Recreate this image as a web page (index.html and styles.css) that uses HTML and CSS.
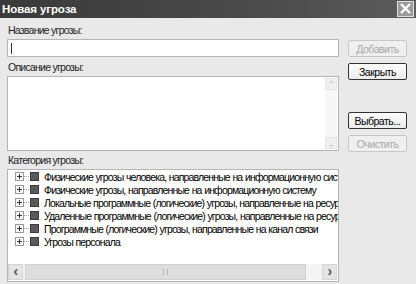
FILE: index.html
```html
<!DOCTYPE html>
<html>
<head>
    <title>Новая угроза</title>
    <link rel="stylesheet" href="styles.css">
</head>
<body>
    <div class="window">
        <div class="title-bar">
            <span class="title">Новая угроза</span>
            <div class="close-btn">
                <svg width="13" height="11" viewBox="0 0 13 11">
                    <path d="M2 1 L11 10 M11 1 L2 10" stroke="#fff" stroke-width="2.4" fill="none"/>
                </svg>
            </div>
        </div>
        <div class="content">
            <div class="left-col">
                <div class="label first">Название угрозы:</div>
                <div class="input"><span class="caret"></span></div>
                <div class="label second">Описание угрозы:</div>
                <div class="textarea">
                    <div class="vscroll">
                        <div class="arrow">&#8963;</div>
                        <div class="arrow">&#8964;</div>
                    </div>
                </div>
                <div class="label third">Категория угрозы:</div>
                <div class="tree">
                    <div class="tree-list">
                        <div class="tree-item"><span class="plus"></span><span class="dots"></span><span class="icon"></span><span class="text">Физические угрозы человека, направленные на информационную систему</span></div>
                        <div class="tree-item"><span class="plus"></span><span class="dots"></span><span class="icon"></span><span class="text">Физические угрозы, направленные на информационную систему</span></div>
                        <div class="tree-item"><span class="plus"></span><span class="dots"></span><span class="icon"></span><span class="text">Локальные программные (логические) угрозы, направленные на ресурсы</span></div>
                        <div class="tree-item"><span class="plus"></span><span class="dots"></span><span class="icon"></span><span class="text">Удаленные программные (логические) угрозы, направленные на ресурсы</span></div>
                        <div class="tree-item"><span class="plus"></span><span class="dots"></span><span class="icon"></span><span class="text">Программные (логические) угрозы, направленные на канал связи</span></div>
                        <div class="tree-item"><span class="plus"></span><span class="dots"></span><span class="icon"></span><span class="text">Угрозы персонала</span></div>
                    </div>
                    <div class="hscroll">
                        <div class="sb-btn">&lsaquo;</div>
                        <div class="thumb"><span class="grip"></span></div>
                        <div class="track"></div>
                        <div class="sb-btn">&rsaquo;</div>
                    </div>
                </div>
            </div>
            <div class="right-col">
                <div class="btn disabled add">Добавить</div>
                <div class="btn close">Закрыть</div>
                <div class="btn choose">Выбрать...</div>
                <div class="btn disabled clear">Очистить</div>
            </div>
        </div>
    </div>
</body>
</html>
```

FILE: styles.css
```css
html, body {
    margin: 0;
    padding: 0;
    background: #e9e9e9;
    font-family: 'Liberation Sans', Arial, sans-serif;
    font-size: 10.5px;
    letter-spacing: -0.75px;
    color: #000;
}
.window {
    width: 416px;
    height: 284px;
    background: #e9e9e9;
    overflow: hidden;
}
.title-bar {
    height: 18px;
    background: linear-gradient(to right, #3a3a3a, #4a4a4a 60%, #5c5c5c);
    display: flex;
    align-items: center;
    justify-content: space-between;
    padding: 0 2px 0 2px;
}
.title {
    color: #fff;
    font-weight: bold;
    font-size: 11.5px;
    letter-spacing: -0.1px;
}
.close-btn {
    width: 15px;
    height: 14px;
    border: 1px solid #e0e0e0;
    background: #9a9a9a;
    display: flex;
    align-items: center;
    justify-content: center;
    margin-top: -1px;
}
.content {
    display: flex;
    padding-left: 7px;
    gap: 9px;
}
.left-col {
    width: 332px;
    display: flex;
    flex-direction: column;
}
.label {
    height: 13px;
    line-height: 13px;
    white-space: nowrap;
    padding-left: 1px;
    color: #222;
}
.label.first { margin-top: 6px; margin-bottom: 2px; }
.label.second { margin-top: 4px; margin-bottom: 2px; }
.label.third { margin-top: 3px; margin-bottom: 2px; }
.input {
    height: 16px;
    background: #fff;
    border: 1px solid #b5b5b5;
    display: flex;
    align-items: center;
    padding-left: 3px;
}
.caret {
    width: 1px;
    height: 11px;
    background: #333;
}
.textarea {
    height: 73px;
    background: #fff;
    border: 1px solid #b5b5b5;
    display: flex;
    justify-content: flex-end;
}
.vscroll {
    width: 12px;
    margin: 1px 1px 1px 0;
    background: #f7f7f7;
    display: flex;
    flex-direction: column;
    justify-content: space-between;
}
.arrow {
    height: 12px;
    background: #f0f0f0;
    border: 1px solid #e4e4e4;
    box-sizing: border-box;
    color: #c8c8c8;
    font-size: 10px;
    line-height: 12px;
    text-align: center;
}
.tree {
    height: 111px;
    background: #fff;
    border: 1px solid #b5b5b5;
    display: flex;
    flex-direction: column;
    overflow: hidden;
}
.tree-list {
    flex: 1;
    overflow: hidden;
}
.tree-item {
    height: 13px;
    display: flex;
    align-items: center;
    white-space: nowrap;
    padding-left: 7px;
    font-size: 10.5px;
    letter-spacing: -0.85px;
    word-spacing: 0.5px;
}
.plus {
    width: 7px;
    height: 7px;
    border: 1px solid #9a9a9a;
    position: relative;
    flex: none;
    background: #fafafa;
}
.plus::before {
    content: "";
    position: absolute;
    left: 1px;
    top: 3px;
    width: 5px;
    height: 1px;
    background: #333;
}
.plus::after {
    content: "";
    position: absolute;
    left: 3px;
    top: 1px;
    width: 1px;
    height: 5px;
    background: #333;
}
.dots {
    width: 5px;
    border-top: 1px dotted #a0a0a0;
    flex: none;
}
.icon {
    width: 7px;
    height: 7px;
    background: #5a5a5a;
    border: 1px solid #3a3a3a;
    flex: none;
    margin-left: 1px;
}
.text {
    margin-left: 5px;
}
.hscroll {
    height: 16px;
    display: flex;
    background: #f4f4f4;
    margin: 0 1px 1px 0;
}
.sb-btn {
    width: 15px;
    background: #e4e4e4;
    border: 1px solid #d4d4d4;
    box-sizing: border-box;
    color: #555;
    font-size: 14px;
    font-weight: bold;
    line-height: 13px;
    text-align: center;
}
.thumb {
    width: 281px;
    margin-left: 2px;
    background: #dedede;
    border: 1px solid #cfcfcf;
    box-sizing: border-box;
    display: flex;
    justify-content: center;
    align-items: center;
}
.grip {
    width: 5px;
    height: 6px;
    border-left: 1px solid #b8b8b8;
    border-right: 1px solid #b8b8b8;
    box-sizing: border-box;
}
.track {
    flex: 1;
}
.right-col {
    width: 59px;
    display: flex;
    flex-direction: column;
}
.btn {
    height: 17px;
    box-sizing: border-box;
    border: 1px solid #333;
    border-radius: 2px;
    background: linear-gradient(#fdfdfd, #ececec);
    display: flex;
    align-items: center;
    justify-content: center;
    white-space: nowrap;
    letter-spacing: -0.5px;
}
.btn.disabled {
    border-color: #c8c8c8;
    color: #a8a8a8;
    background: #efefef;
}
.btn.add { margin-top: 22px; }
.btn.close { margin-top: 6px; }
.btn.choose { margin-top: 32px; }
.btn.clear { margin-top: 6px; }
```
